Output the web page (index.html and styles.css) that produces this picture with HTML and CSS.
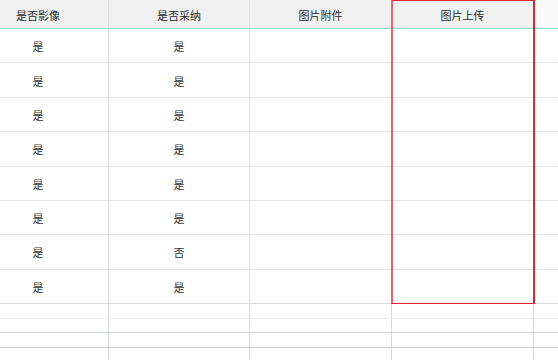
FILE: index.html
```html
<!DOCTYPE html>
<html lang="zh">
<head>
<meta charset="utf-8">
<link rel="stylesheet" href="styles.css">
</head>
<body>
<div class="sheet">
  <div class="row head">
    <div class="cell c1">是否影像</div>
    <div class="cell c2">是否采纳</div>
    <div class="cell c3">图片附件</div>
    <div class="cell c4">图片上传</div>
    <div class="cell c5 blank"></div>
  </div>
  <div class="row body"><div class="cell c1">是</div><div class="cell c2">是</div><div class="cell c3"></div><div class="cell c4"></div><div class="cell c5"></div></div>
  <div class="row body"><div class="cell c1">是</div><div class="cell c2">是</div><div class="cell c3"></div><div class="cell c4"></div><div class="cell c5"></div></div>
  <div class="row body"><div class="cell c1">是</div><div class="cell c2">是</div><div class="cell c3"></div><div class="cell c4"></div><div class="cell c5"></div></div>
  <div class="row body"><div class="cell c1">是</div><div class="cell c2">是</div><div class="cell c3"></div><div class="cell c4"></div><div class="cell c5"></div></div>
  <div class="row body"><div class="cell c1">是</div><div class="cell c2">是</div><div class="cell c3"></div><div class="cell c4"></div><div class="cell c5"></div></div>
  <div class="row body"><div class="cell c1">是</div><div class="cell c2">是</div><div class="cell c3"></div><div class="cell c4"></div><div class="cell c5"></div></div>
  <div class="row body"><div class="cell c1">是</div><div class="cell c2">否</div><div class="cell c3"></div><div class="cell c4"></div><div class="cell c5"></div></div>
  <div class="row body last"><div class="cell c1">是</div><div class="cell c2">是</div><div class="cell c3"></div><div class="cell c4"></div><div class="cell c5"></div></div>
  <div class="row filler f1"><div class="cell c1"></div><div class="cell c2"></div><div class="cell c3"></div><div class="cell c4"></div><div class="cell c5"></div></div>
  <div class="row filler f2"><div class="cell c1"></div><div class="cell c2"></div><div class="cell c3"></div><div class="cell c4"></div><div class="cell c5"></div></div>
  <div class="row filler f3"><div class="cell c1"></div><div class="cell c2"></div><div class="cell c3"></div><div class="cell c4"></div><div class="cell c5"></div></div>
  <div class="row filler f4"><div class="cell c1"></div><div class="cell c2"></div><div class="cell c3"></div><div class="cell c4"></div><div class="cell c5"></div></div>
  <div class="selection"></div>
</div>
</body>
</html>
```
FILE: styles.css
```css
html, body {
  margin: 0;
  padding: 0;
  background: #ffffff;
}

body {
  width: 558px;
  height: 360px;
  overflow: hidden;
  font-family: "Noto Sans CJK SC", "Noto Sans", sans-serif;
  font-size: 11px;
  color: #333333;
}

.sheet {
  position: relative;
  display: flex;
  flex-direction: column;
}

.row {
  display: grid;
  grid-template-columns: 109px 141px 142px 142px 1fr;
  box-sizing: border-box;
}

.cell {
  box-sizing: border-box;
  display: flex;
  align-items: center;
  justify-content: center;
  border-right: 1px solid #e3e3e8;
  white-space: nowrap;
}

.cell.c1 {
  padding-right: 32px;
  border-right-color: #dcdce2;
}

.cell.c3 {
  border-right-color: #e6e6ec;
}

.cell.c5 {
  border-right: none;
}

.head {
  height: 29px;
  border-bottom: 1px solid #a3dcc8;
  background: #f0f0f0;
}

.head .cell {
  font-size: 11px;
  color: #2b2b2b;
  padding-top: 1px;
}

.head .cell.c1 {
  padding-right: 32px;
}

.head .cell.blank {
  background: #fafafa;
}

.body {
  height: 34.375px;
  border-bottom: 1px solid #e3e3e9;
}

.body .cell {
  padding-top: 1px;
}

.body.last {
  border-bottom-color: #d8d8de;
}

.filler {
  height: 14.6px;
}

.f1 {
  border-bottom: 1px solid #f0f0f5;
}

.f2 {
  border-bottom: 1px solid #d2d6e1;
}

.f3 {
  border-bottom: 1px solid #c9cdd9;
}

.f4 {
  border-bottom: 1px solid #ffffff;
}

.filler .cell {
  border-right-color: #d6d8e2;
}

.filler .cell.c3 {
  border-right-color: #d6d8e2;
}

.selection {
  position: absolute;
  left: 391px;
  top: 0;
  width: 144px;
  height: 304px;
  box-sizing: border-box;
  border: 1px solid #e3232c;
  border-left: 2px solid #ef6067;
  border-right: 2px solid #e3232c;
  pointer-events: none;
}
```
